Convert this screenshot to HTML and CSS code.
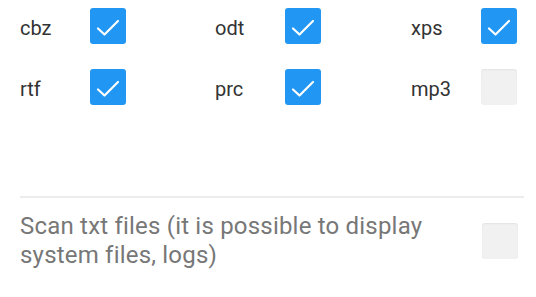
FILE: index.html
```html
<!DOCTYPE html>
<html lang="en">

<head>
    <meta charset="UTF-8">
    <meta name="viewport" content="width=device-width, initial-scale=1.0">
    <title>Formats</title>
    <link rel="stylesheet" href="styles.css">
</head>

<body>
    <div class="container">
        <div class="formats">
            <div class="format">
                <span class="format-name">cbz</span>
                <span class="check checked"><svg viewBox="0 0 36 36"><path d="M8 20.5 L14.5 26.5 L28 13" /></svg></span>
            </div>
            <div class="format">
                <span class="format-name">odt</span>
                <span class="check checked"><svg viewBox="0 0 36 36"><path d="M8 20.5 L14.5 26.5 L28 13" /></svg></span>
            </div>
            <div class="format">
                <span class="format-name">xps</span>
                <span class="check checked"><svg viewBox="0 0 36 36"><path d="M8 20.5 L14.5 26.5 L28 13" /></svg></span>
            </div>
            <div class="format">
                <span class="format-name">rtf</span>
                <span class="check checked"><svg viewBox="0 0 36 36"><path d="M8 20.5 L14.5 26.5 L28 13" /></svg></span>
            </div>
            <div class="format">
                <span class="format-name">prc</span>
                <span class="check checked"><svg viewBox="0 0 36 36"><path d="M8 20.5 L14.5 26.5 L28 13" /></svg></span>
            </div>
            <div class="format">
                <span class="format-name">mp3</span>
                <span class="check"></span>
            </div>
        </div>

        <div class="divider"></div>

        <div class="option">
            <p class="option-text">Scan txt files (it is possible to display system files, logs)</p>
            <span class="check"></span>
        </div>
    </div>
</body>

</html>
```

FILE: styles.css
```css
body {
    margin: 0;
    background-color: #ffffff;
    font-family: Roboto, "Noto Sans", sans-serif;
}

.container {
    padding: 8px 12px 0 20px;
}

.formats {
    display: grid;
    grid-template-columns: 195px 196px auto;
    row-gap: 25px;
}

.format {
    display: flex;
    align-items: center;
    height: 36px;
}

.format-name {
    width: 70px;
    padding-top: 4px;
    font-size: 20px;
    color: #333333;
}

.check {
    display: block;
    width: 36px;
    height: 36px;
    border-radius: 3px;
    background-color: #f1f1f1;
    box-shadow: inset 0 1px 2px rgba(0, 0, 0, 0.06);
}

.check.checked {
    background-color: #2196f3;
    box-shadow: none;
}

.check svg {
    display: block;
    width: 36px;
    height: 36px;
}

.check path {
    fill: none;
    stroke: #ffffff;
    stroke-width: 2.2;
    stroke-linecap: round;
    stroke-linejoin: round;
}

.divider {
    height: 2px;
    background-color: #ececec;
    margin-top: 91px;
}

.option {
    display: flex;
    align-items: center;
    justify-content: space-between;
    padding-right: 6px;
    margin-top: 14px;
}

.option-text {
    margin: 0;
    width: 440px;
    font-size: 24px;
    line-height: 29px;
    letter-spacing: 0.2px;
    color: #777777;
}
```
